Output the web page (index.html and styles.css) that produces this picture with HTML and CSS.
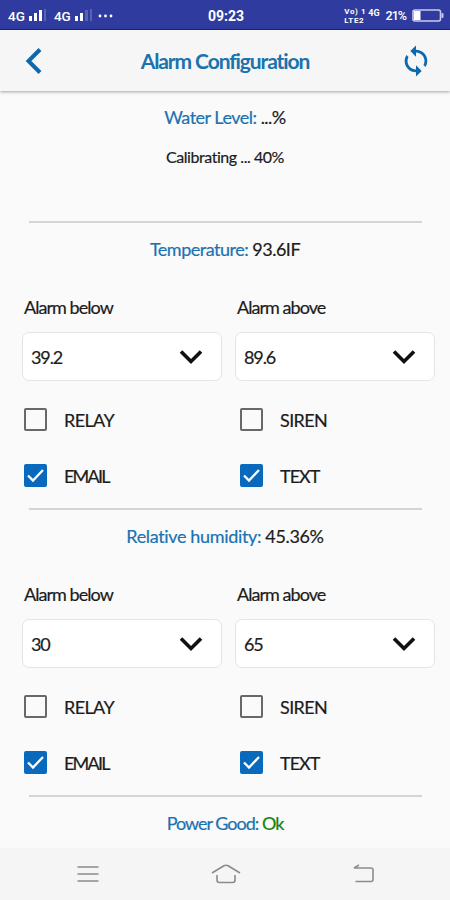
FILE: index.html
```
<!DOCTYPE html>
<html lang="en">
<head>
    <meta charset="UTF-8">
    <meta name="viewport" content="width=device-width, initial-scale=1.0">
    <title>Alarm Configuration</title>
    <link rel="stylesheet" href="styles.css">
</head>
<body>

<div class="status-bar">
    <div class="signals">
        <span>4G</span>
        <svg width="18" height="13" viewBox="0 0 18 13" fill="#fff">
            <rect x="0" y="7" width="3" height="5"/>
            <rect x="5" y="4" width="3" height="8"/>
            <rect x="10" y="1" width="3" height="11"/>
            <rect x="15" y="0" width="2" height="12" opacity=".2"/>
        </svg>
        <span class="second">4G</span>
        <svg width="18" height="13" viewBox="0 0 18 13" fill="#fff">
            <rect x="0" y="7" width="3" height="5"/>
            <rect x="5" y="4" width="3" height="8"/>
            <rect x="10" y="1" width="3" height="11" opacity=".2"/>
            <rect x="15" y="0" width="2" height="12" opacity=".2"/>
        </svg>
        <svg class="dots" width="15" height="4" viewBox="0 0 15 4" fill="#fff">
            <circle cx="2" cy="2" r="1.4"/>
            <circle cx="7.5" cy="2" r="1.4"/>
            <circle cx="13" cy="2" r="1.4"/>
        </svg>
    </div>
    <div class="clock">09:23</div>
    <div class="indicators">
        <div class="volte"><span>Vo) 1</span><span>LTE2</span></div>
        <span class="net">4G</span>
        <span class="percent">21%</span>
        <svg width="32" height="13" viewBox="0 0 32 13">
            <rect x="1" y="1" width="27.5" height="11" rx="2" fill="none" stroke="#c9ccee" stroke-width="1.6"/>
            <rect x="2" y="2" width="6.5" height="9" fill="#fff"/>
            <rect x="29.5" y="4" width="2" height="5" rx="1" fill="#c9ccee"/>
        </svg>
    </div>
</div>

<div class="header">
    <svg width="18" height="28" viewBox="0 0 18 28" fill="none" stroke="#0e69ac" stroke-width="4">
        <path d="M15 2.5 3.5 14 15 25.5"/>
    </svg>
    <h1>Alarm Configuration</h1>
    <svg width="34" height="34" viewBox="0 0 24 24" fill="#0e69ac">
        <path d="M12 4V1L8 5l4 4V6c3.31 0 6 2.69 6 6 0 1.01-.25 1.97-.7 2.8l1.46 1.46A7.93 7.93 0 0 0 20 12c0-4.42-3.58-8-8-8zm0 14c-3.31 0-6-2.69-6-6 0-1.01.25-1.97.7-2.8L5.24 7.74A7.93 7.93 0 0 0 4 12c0 4.42 3.58 8 8 8v3l4-4-4-4v3z"/>
    </svg>
</div>

<div class="content">
    <div class="reading water"><b>Water Level:</b> <span>...%</span></div>
    <div class="reading calibrating">Calibrating ... 40%</div>
    <div class="line"></div>

    <div class="reading temp"><b>Temperature:</b> <span>93.6IF</span></div>
    <div class="fields">
        <div class="label">Alarm below</div>
        <div class="label">Alarm above</div>
        <div class="select">39.2 <svg width="24" height="16" viewBox="0 0 24 16"><path d="M2 2.5 12 12.5 22 2.5"/></svg></div>
        <div class="select">89.6 <svg width="24" height="16" viewBox="0 0 24 16"><path d="M2 2.5 12 12.5 22 2.5"/></svg></div>
    </div>
    <div class="checks">
        <div class="check"><i class="box"></i><span class="relay">RELAY</span></div>
        <div class="check"><i class="box"></i><span class="siren">SIREN</span></div>
        <div class="check"><i class="box checked"><svg width="23" height="23" viewBox="0 0 23 23"><path d="M4 11.5 9 16.5 19 6"/></svg></i><span class="email">EMAIL</span></div>
        <div class="check"><i class="box checked"><svg width="23" height="23" viewBox="0 0 23 23"><path d="M4 11.5 9 16.5 19 6"/></svg></i><span class="text">TEXT</span></div>
    </div>
    <div class="line"></div>

    <div class="reading humidity"><b>Relative humidity:</b> <span>45.36%</span></div>
    <div class="fields">
        <div class="label">Alarm below</div>
        <div class="label">Alarm above</div>
        <div class="select">30 <svg width="24" height="16" viewBox="0 0 24 16"><path d="M2 2.5 12 12.5 22 2.5"/></svg></div>
        <div class="select">65 <svg width="24" height="16" viewBox="0 0 24 16"><path d="M2 2.5 12 12.5 22 2.5"/></svg></div>
    </div>
    <div class="checks">
        <div class="check"><i class="box"></i><span class="relay">RELAY</span></div>
        <div class="check"><i class="box"></i><span class="siren">SIREN</span></div>
        <div class="check"><i class="box checked"><svg width="23" height="23" viewBox="0 0 23 23"><path d="M4 11.5 9 16.5 19 6"/></svg></i><span class="email">EMAIL</span></div>
        <div class="check"><i class="box checked"><svg width="23" height="23" viewBox="0 0 23 23"><path d="M4 11.5 9 16.5 19 6"/></svg></i><span class="text">TEXT</span></div>
    </div>
    <div class="line"></div>

    <div class="reading power"><b>Power Good:</b> <span class="ok">Ok</span></div>
</div>

<div class="nav-bar">
    <svg width="22" height="18" viewBox="0 0 22 18">
        <path d="M.5 2H21.5M.5 9H21.5M.5 16H21.5"/>
    </svg>
    <svg width="30" height="22" viewBox="0 0 30 22">
        <path d="M1 10 12.5 3Q15 1.5 17.5 3L29 10M6 12V17Q6 19.500 8.500 19.500H21.500Q24 19.500 24 17V12"/>
    </svg>
    <svg width="23" height="20" viewBox="0 0 23 20">
        <path d="M2 4H19Q21 4 21 6V15.5Q21 17.5 19 17.5H3.5M7 1 2 4"/>
    </svg>
</div>

</body>
</html>
```
FILE: styles.css
```
* {
    box-sizing: border-box;
}

body {
    margin: 0;
    width: 450px;
    height: 900px;
    display: flex;
    flex-direction: column;
    font-family: Lato, "Open Sans", sans-serif;
    font-size: 18px;
    color: #1c1c1c;
    background-color: #fafafa;
    overflow: hidden;
}

svg {
    display: block;
    flex: none;
}

/* Phone status bar */
.status-bar {
    height: 30px;
    flex: none;
    display: grid;
    grid-template-columns: 1fr auto 1fr;
    align-items: center;
    padding: 2px 6px 0 8px;
    background-color: #303b9f;
    border-bottom: 1px solid #1c2184;
    color: #fff;
    font-family: Roboto, sans-serif;
    font-size: 13.5px;
    font-weight: 500;
}

.signals,
.indicators {
    display: flex;
    align-items: center;
}

.signals svg {
    margin-left: 4px;
}

.signals .second {
    margin-left: 7px;
}

.signals .dots {
    margin-left: 5px;
}

.clock {
    font-size: 14px;
    font-weight: 700;
}

.indicators {
    justify-content: flex-end;
}

.volte {
    display: flex;
    flex-direction: column;
    font-size: 8px;
    line-height: 9px;
    font-weight: 700;
    letter-spacing: 0.6px;
}

.net {
    font-size: 9px;
    font-weight: 700;
    margin: -6px 6px 0 2px;
}

.percent {
    font-size: 12.5px;
    letter-spacing: -1px;
    margin-right: 6px;
}

/* Title bar */
.header {
    height: 61px;
    flex: none;
    display: flex;
    align-items: center;
    justify-content: space-between;
    padding: 0 17px 0 25px;
    background-color: #f6f6f6;
    box-shadow: 0 1px 3px rgba(0, 0, 0, 0.35);
}

h1 {
    margin: 0 0 0 8px;
    font-size: 21px;
    font-weight: 700;
    letter-spacing: -1.1px;
    color: #1a72ae;
}

/* Readings and settings */
.content {
    flex: 1;
    padding-top: 13px;
    -webkit-text-stroke: 0.2px;
}

.reading {
    height: 28px;
    line-height: 26px;
    margin-top: 13px;
    text-align: center;
    white-space: nowrap;
    letter-spacing: -0.5px;
}

.reading b {
    font-weight: 400;
    color: #1b72b1;
}

.reading .ok {
    color: #148414;
}

.water {
    margin-top: 0;
}

.calibrating {
    margin: 12px 0 49px;
    font-size: 16px;
    letter-spacing: -0.45px;
}

.humidity {
    letter-spacing: -0.35px;
}

.power {
    letter-spacing: -1px;
}

.line {
    height: 2px;
    margin: 0 28px 0 29px;
    background-color: #d4d4d4;
}

.fields {
    display: grid;
    grid-template-columns: 200px 200px;
    column-gap: 13px;
    row-gap: 10px;
    margin: 30px 0 0 22px;
}

.label {
    height: 28px;
    line-height: 26px;
    padding-left: 2px;
    letter-spacing: -0.95px;
}

.select {
    height: 49px;
    display: flex;
    align-items: center;
    justify-content: space-between;
    padding: 1px 18px 0 8px;
    background-color: #fff;
    border: 1px solid #e4e4e4;
    border-radius: 7px;
    letter-spacing: -1.1px;
}

.select path {
    fill: none;
    stroke: #111;
    stroke-width: 3.6;
}

.checks {
    display: grid;
    grid-template-columns: 216px 1fr;
    grid-auto-rows: 55px;
    row-gap: 1px;
    margin: 11px 0 5px 24px;
}

.check {
    display: flex;
    align-items: center;
    gap: 17px;
}

.relay,
.siren {
    letter-spacing: -0.6px;
}

.email {
    letter-spacing: -1.8px;
}

.text {
    letter-spacing: -1px;
}

.box {
    width: 23px;
    height: 23px;
    border: 2px solid #686868;
    border-radius: 2px;
}

.box.checked {
    border: none;
    background-color: #0969bd;
}

.box path {
    fill: none;
    stroke: #fff;
    stroke-width: 2.3;
}

/* Android navigation buttons */
.nav-bar {
    height: 52px;
    flex: none;
    display: flex;
    align-items: center;
    justify-content: space-between;
    padding: 0 75px 0 77px;
    background-color: #f5f5f5;
}

.nav-bar path {
    fill: none;
    stroke: #8c8c8c;
    stroke-width: 1.6;
}
```
